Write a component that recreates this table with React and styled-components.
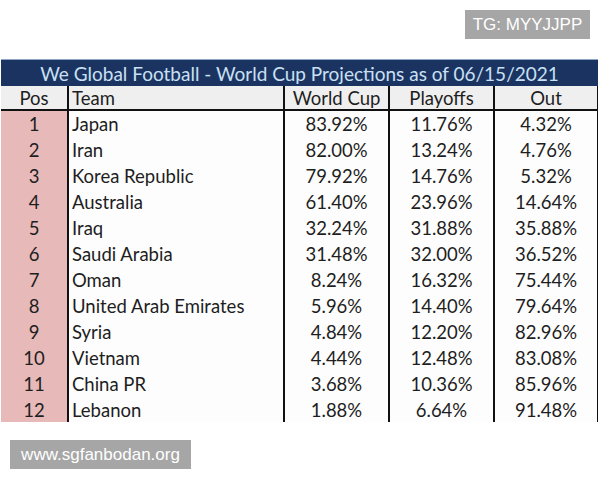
import React from 'react';
import styled, { createGlobalStyle } from 'styled-components';

const Global = createGlobalStyle`
  html, body {
    margin: 0;
    padding: 0;
    background: #ffffff;
  }
`;

const Page = styled.div`
  width: 600px;
  height: 480px;
  overflow: hidden;
  display: flex;
  flex-direction: column;
`;

const TopBar = styled.div`
  height: 59px;
  display: flex;
  justify-content: flex-end;
  align-items: flex-start;
  padding-right: 10px;
  box-sizing: border-box;
`;

const Badge = styled.div`
  margin-top: ${p => p.top || 0}px;
  margin-left: ${p => p.left || 0}px;
  width: ${p => p.w}px;
  height: 29px;
  background: #a6a6a6;
  color: #ffffff;
  font-family: "Liberation Sans", Arial, sans-serif;
  font-size: 17px;
  display: flex;
  align-items: center;
  justify-content: center;
`;

const Clip = styled.div`
  height: 363px;
  overflow: hidden;
  margin-left: 1px;
  width: 597px;
`;

const Table = styled.table`
  border-collapse: collapse;
  table-layout: fixed;
  width: 597px;
  font-family: Lato, "Open Sans", sans-serif;
  font-size: 18.5px;
  color: #1e1e1e;
`;

const TitleCell = styled.th`
  height: 26px;
  padding: 0;
  background: #1b3361;
  color: #c9e0f4;
  font-weight: 400;
  font-size: 19px;
  text-align: center;
  border-top: 1px solid #8ea6c4;
`;

const HeadCell = styled.th`
  height: 23px;
  padding: 0 ${p => (p.left ? '3px' : '0')};
  background: #efefef;
  font-weight: 400;
  text-align: ${p => (p.left ? 'left' : 'center')};
  border-left: 2px solid #111;
  border-right: 2px solid #111;
  border-bottom: 2px solid #111;
  &:first-child {
    border-left: none;
  }
`;

const Cell = styled.td`
  height: 26px;
  padding: 0 ${p => (p.left ? '3px' : '0')};
  background: ${p => (p.pos ? '#e7b9b9' : '#fdfdfd')};
  text-align: ${p => (p.left ? 'left' : 'center')};
  border-left: 2px solid #111;
  border-right: 2px solid #111;
  white-space: nowrap;
  &:first-child {
    border-left: none;
  }
`;

const BottomBar = styled.div`
  padding-top: 18px;
`;

const rows = [
  ['Japan', '83.92%', '11.76%', '4.32%'],
  ['Iran', '82.00%', '13.24%', '4.76%'],
  ['Korea Republic', '79.92%', '14.76%', '5.32%'],
  ['Australia', '61.40%', '23.96%', '14.64%'],
  ['Iraq', '32.24%', '31.88%', '35.88%'],
  ['Saudi Arabia', '31.48%', '32.00%', '36.52%'],
  ['Oman', '8.24%', '16.32%', '75.44%'],
  ['United Arab Emirates', '5.96%', '14.40%', '79.64%'],
  ['Syria', '4.84%', '12.20%', '82.96%'],
  ['Vietnam', '4.44%', '12.48%', '83.08%'],
  ['China PR', '3.68%', '10.36%', '85.96%'],
  ['Lebanon', '1.88%', '6.64%', '91.48%'],
  ['', '', '', ''],
];

export default function App() {
  return (
    <Page>
      <Global />
      <TopBar>
        <Badge top={10} w={125}>TG: MYYJJPP</Badge>
      </TopBar>
      <Clip>
        <Table>
          <colgroup>
            <col style={{ width: 67 }} />
            <col style={{ width: 216 }} />
            <col style={{ width: 105 }} />
            <col style={{ width: 105 }} />
            <col style={{ width: 104 }} />
          </colgroup>
          <thead>
            <tr>
              <TitleCell colSpan={5}>
                We Global Football - World Cup Projections as of 06/15/2021
              </TitleCell>
            </tr>
            <tr>
              <HeadCell>Pos</HeadCell>
              <HeadCell left>Team</HeadCell>
              <HeadCell>World Cup</HeadCell>
              <HeadCell>Playoffs</HeadCell>
              <HeadCell>Out</HeadCell>
            </tr>
          </thead>
          <tbody>
            {rows.map((r, i) => (
              <tr key={i}>
                <Cell pos>{r[0] ? i + 1 : ''}</Cell>
                <Cell left>{r[0]}</Cell>
                <Cell>{r[1]}</Cell>
                <Cell>{r[2]}</Cell>
                <Cell>{r[3]}</Cell>
              </tr>
            ))}
          </tbody>
        </Table>
      </Clip>
      <BottomBar>
        <Badge left={10} w={181}>www.sgfanbodan.org</Badge>
      </BottomBar>
    </Page>
  );
}
